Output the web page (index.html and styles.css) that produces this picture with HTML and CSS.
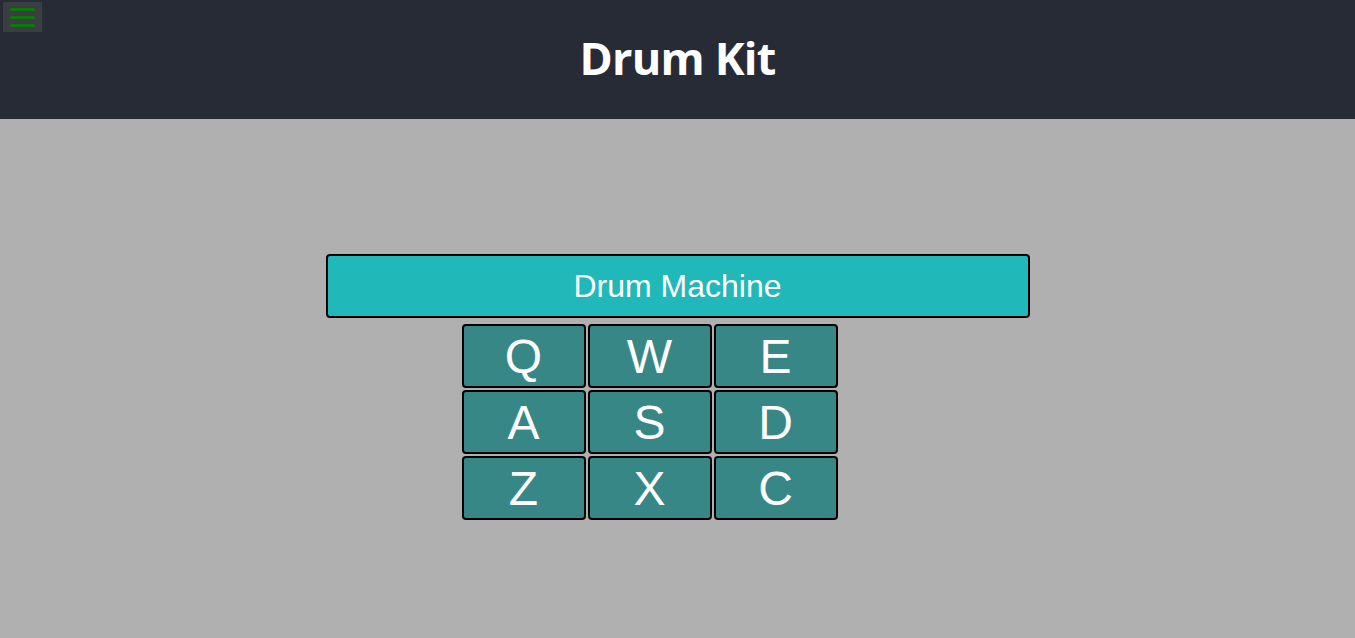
FILE: index.html
```html
<!DOCTYPE html>
<html lang="en">
<head>
<meta charset="utf-8">
<title>Drum Kit</title>
<link rel="stylesheet" href="styles.css">
</head>
<body>
<header class="top">
  <button class="menu" aria-label="menu">
    <span class="bar"></span><span class="bar"></span><span class="bar"></span>
  </button>
  <h1 class="title">Drum Kit</h1>
</header>
<main class="stage">
  <div class="machine">
    <div class="display">Drum Machine</div>
    <div class="pads">
      <div class="pad">Q</div><div class="pad">W</div><div class="pad">E</div>
      <div class="pad">A</div><div class="pad">S</div><div class="pad">D</div>
      <div class="pad">Z</div><div class="pad">X</div><div class="pad">C</div>
    </div>
  </div>
</main>
</body>
</html>
```
FILE: styles.css
```css
html, body {
  margin: 0;
  padding: 0;
  height: 100%;
}
body {
  background: #b0b0b0;
  font-family: "Liberation Sans", Arial, sans-serif;
  overflow: hidden;
}
.top {
  position: relative;
  height: 119px;
  background: #272b35;
  display: flex;
  align-items: center;
  justify-content: center;
}
.menu {
  position: absolute;
  left: 3px;
  top: 2px;
  width: 39px;
  height: 30px;
  background: #3b3e41;
  border: none;
  padding: 0;
  display: flex;
  flex-direction: column;
  align-items: center;
  justify-content: center;
  gap: 5px;
}
.bar {
  display: block;
  width: 25px;
  height: 3px;
  border-radius: 2px;
  background: #0b7a0b;
}
.title {
  margin: 0;
  color: #ffffff;
  font-family: "Open Sans", sans-serif;
  font-weight: 700;
  font-size: 45px;
  letter-spacing: -0.8px;
  line-height: 1;
  padding-bottom: 4px;
}
.stage {
  display: flex;
  justify-content: center;
  padding-top: 135px;
}
.machine {
  width: 704px;
  display: flex;
  flex-direction: column;
  gap: 6px;
}
.display {
  box-sizing: border-box;
  height: 64px;
  border: 2px solid #000;
  border-radius: 4px;
  background: #20b8b8;
  color: #fff;
  font-size: 32px;
  display: flex;
  align-items: center;
  justify-content: center;
}
.pads {
  margin-left: 136px;
  display: grid;
  grid-template-columns: repeat(3, 124px);
  grid-auto-rows: 64px;
  gap: 2px 2px;
}
.pad {
  box-sizing: border-box;
  border: 2px solid #000;
  border-radius: 4px;
  background: #378786;
  color: #fff;
  font-size: 48px;
  display: flex;
  align-items: center;
  justify-content: center;
}
```
